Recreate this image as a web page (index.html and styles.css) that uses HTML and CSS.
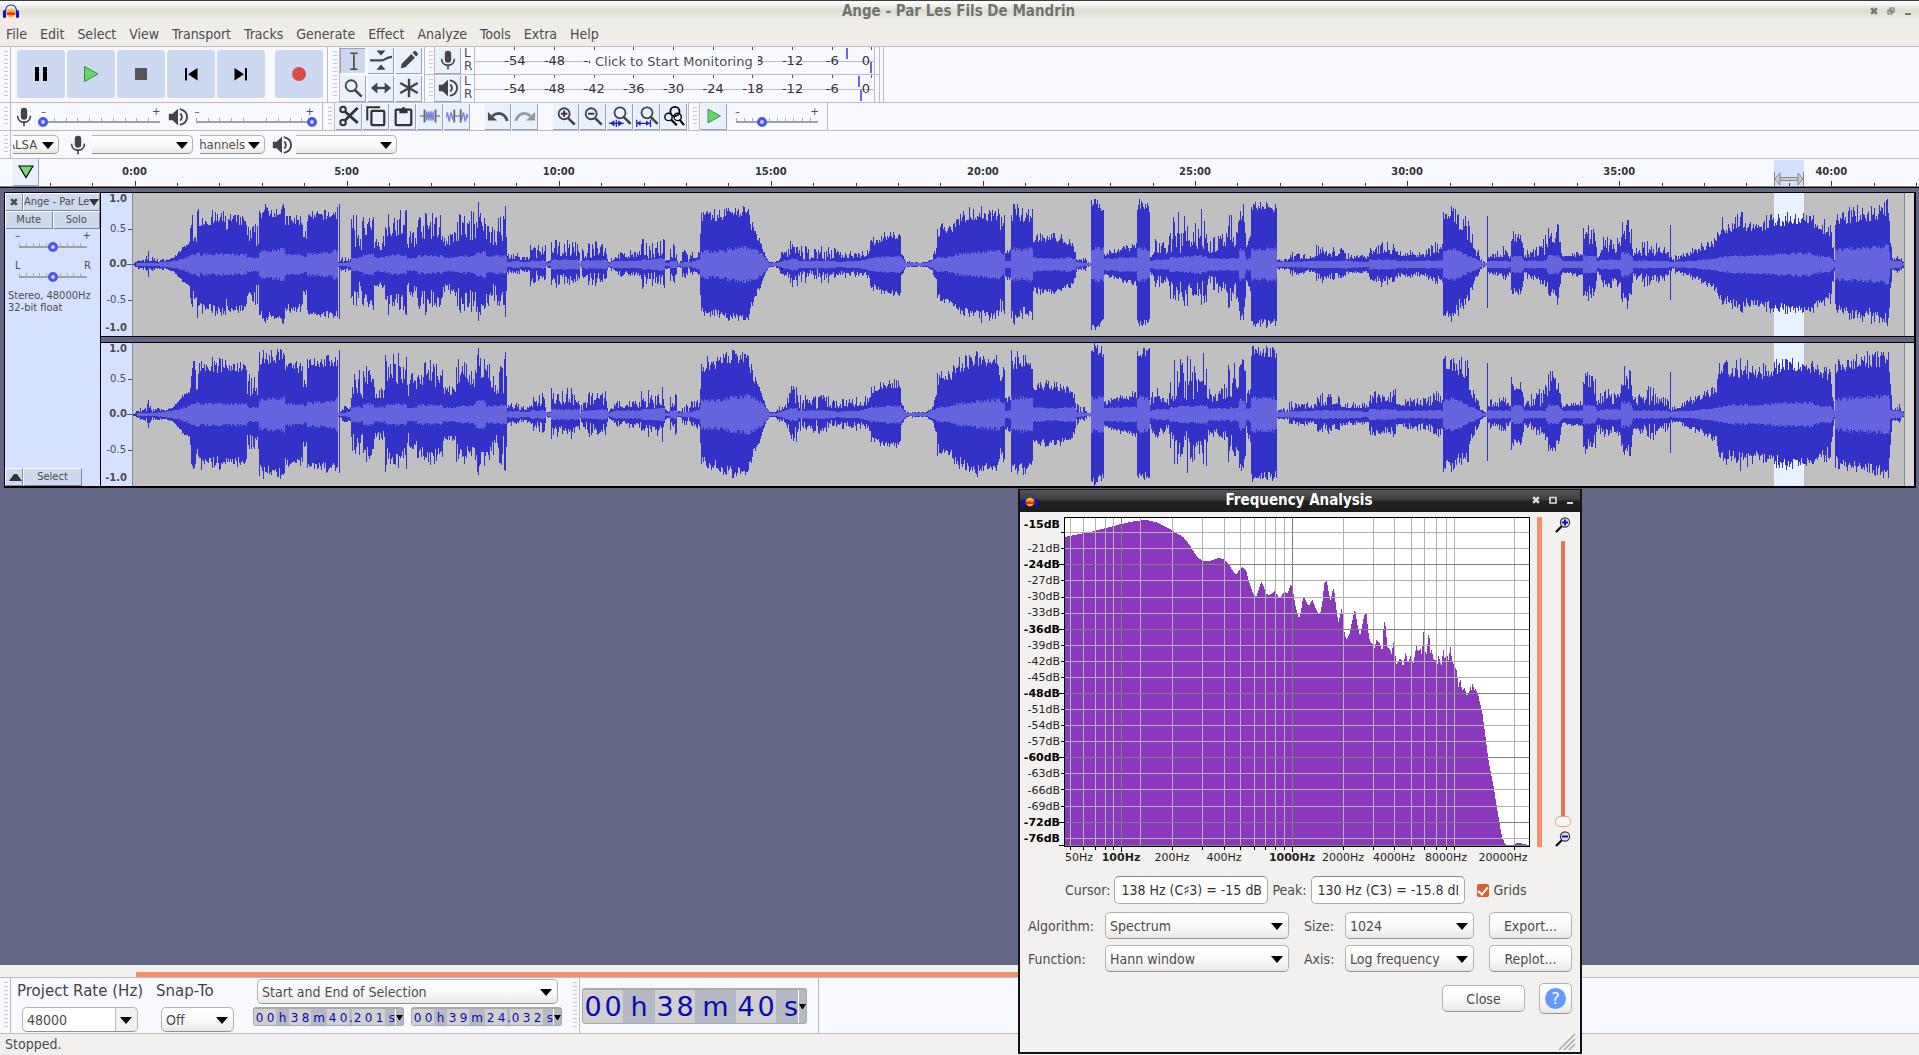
FILE: index.html
```html
<!DOCTYPE html>
<html lang="en">
<head>
<meta charset="utf-8">
<title>Ange - Par Les Fils De Mandrin</title>
<link rel="stylesheet" href="styles.css">
</head>
<body>
<svg class="defs" aria-hidden="true">
  <defs>
    <symbol id="i-logo" viewBox="0 0 16 15"><path d="M2.500 9C2 3 4.500 1 8 1s6 2 5.500 8" fill="none" stroke="#2a3ea8" stroke-width="1.200"/><circle cx="8" cy="9" r="4.200" fill="#f5b71c"/><path d="M4 9.500l1-1 1 1.500 1-2 1 1.500 1-1 1 1 1-1 1 1v1H4z" fill="#f22" stroke="#f22"/><rect x="0" y="6" width="3" height="8" rx="1.500" fill="#0a12d0"/><rect x="13" y="6" width="3" height="8" rx="1.500" fill="#0a12d0"/></symbol>
    <symbol id="i-pause" viewBox="0 0 24 24"><path d="M6 5h4v14H6zM14 5h4v14h-4z" fill="#000"/></symbol>
    <symbol id="i-play" viewBox="0 0 24 24"><path d="M5.500 4.500L19 12 5.500 19.500z" fill="#6ad567" stroke="#3c8a3a"/></symbol>
    <symbol id="i-stop" viewBox="0 0 24 24"><path d="M6 6h12v12H6z" fill="#555"/></symbol>
    <symbol id="i-start" viewBox="0 0 24 24"><path d="M6 6h2v12.500H6zM18.500 6v12.500L9 12.250z" fill="#000"/></symbol>
    <symbol id="i-end" viewBox="0 0 24 24"><path d="M16 6h2v12.500h-2zM5.500 6v12.500L15 12.250z" fill="#000"/></symbol>
    <symbol id="i-record" viewBox="0 0 24 24"><circle cx="12" cy="12" r="7" fill="#e04a4a"/></symbol>
    <symbol id="i-beam" viewBox="0 0 24 24"><path d="M9 3.500h3l1 .8 1-.8h3M9 21h3l1-.8 1 .8h3M13 4v16.500" fill="none" stroke="#444" stroke-width="1.800"/></symbol>
    <symbol id="i-env" viewBox="0 0 24 24"><path d="M7 1.500h10L12 7zM7 22.500h10L12 17z" fill="#444"/><path d="M0 12.500h12c5 0 4-3.500 12-4" fill="none" stroke="#444" stroke-width="2.400"/></symbol>
    <symbol id="i-pen" viewBox="0 0 24 24"><path d="M3 21l1-5L14.500 5.500l4 4L8 20zM15.800 4.200l1.700-1.700q1-1 2 0l2 2q1 1 0 2l-1.700 1.700z" fill="#444"/></symbol>
    <symbol id="i-lens" viewBox="0 0 24 24"><circle cx="10" cy="9.500" r="6" fill="none" stroke="#444" stroke-width="2"/><path d="M14 14l7.500 7.500" stroke="#444" stroke-width="2.800"/></symbol>
    <symbol id="i-shift" viewBox="0 0 24 24"><path d="M5 12h14" stroke="#444" stroke-width="2.600"/><path d="M8 6v12l-7-6zM16 6v12l7-6z" fill="#444"/></symbol>
    <symbol id="i-multi" viewBox="0 0 24 24"><path d="M12 2v20M2.500 6.500l19 11M2.500 17.500l19-11" stroke="#444" stroke-width="2.600"/></symbol>
    <symbol id="i-mic" viewBox="0 0 24 24"><rect x="8.500" y="2" width="7" height="13" rx="3.500" fill="#444"/><path d="M5 10.500c0 9.500 14 9.500 14 0M12 17v5" fill="none" stroke="#444" stroke-width="1.800"/></symbol>
    <symbol id="i-speaker" viewBox="0 0 24 24"><path d="M2 8.500h4l6-5.500v18l-6-5.500H2z" fill="#444"/><path d="M14.500 8q3.500 4 0 8M14 3.500c10.500 2.500 10.500 14.500 0 17" fill="none" stroke="#444" stroke-width="2"/></symbol>
    <symbol id="i-cut" viewBox="0 0 24 24"><circle cx="5.500" cy="5" r="3" fill="none" stroke="#333" stroke-width="2.200"/><circle cx="5.500" cy="19" r="3" fill="none" stroke="#333" stroke-width="2.200"/><path d="M7.500 7l14 12.500M7.500 17l14-14" stroke="#333" stroke-width="3"/></symbol>
    <symbol id="i-copy" viewBox="0 0 24 24"><path d="M2.500 17V2.500h14" fill="none" stroke="#333" stroke-width="2.200"/><rect x="7" y="6.500" width="14" height="15.500" rx="1" fill="none" stroke="#333" stroke-width="2.400"/></symbol>
    <symbol id="i-paste" viewBox="0 0 24 24"><rect x="4" y="5" width="17" height="17" rx="1" fill="none" stroke="#333" stroke-width="2.400"/><path d="M8 4h2.500q2-4 4 0H17v5H8z" fill="#333"/></symbol>
    <symbol id="i-trim" viewBox="0 0 24 24"><path d="M1 12h5M18 12h5" stroke="#7784e0" stroke-width="1.500"/><path d="M8 17V7l2.500 10V7l2.500 10V7l2.500 10V7" fill="none" stroke="#7784e0" stroke-width="1.500"/><path d="M6 5v14M18 5v14" stroke="#666" stroke-width="2"/></symbol>
    <symbol id="i-silence" viewBox="0 0 24 24"><path d="M0 14l1.500-6 2 10 2-10 2 8M10 12h5M17 16l2-8 2 10 2-8 1 4" fill="none" stroke="#7784e0" stroke-width="1.500"/><path d="M9 5v14M16 5v14" stroke="#666" stroke-width="2"/></symbol>
    <symbol id="i-undo" viewBox="0 0 24 24"><path d="M22 17.500C20 9 12 7 6 12" fill="none" stroke="currentColor" stroke-width="3"/><path d="M1 7.500v9.500h10z" fill="currentColor"/></symbol>
    <symbol id="i-zin" viewBox="0 0 24 24"><use href="#i-lens"/><path d="M6.500 9.500h7M10 6v7" stroke="#333" stroke-width="2"/></symbol>
    <symbol id="i-zout" viewBox="0 0 24 24"><use href="#i-lens"/><path d="M6.500 9.500h7" stroke="#333" stroke-width="2"/></symbol>
    <symbol id="i-zsel" viewBox="0 0 24 24"><g transform="translate(2 -1)"><use href="#i-lens" width="24" height="24"/></g><path d="M0 20h16M8 16v8" stroke="#22b" stroke-width="1.300"/><path d="M1 20l5-3.500v7zM15 20l-5-3.500v7z" fill="#22b"/></symbol>
    <symbol id="i-zfit" viewBox="0 0 24 24"><g transform="translate(2 -1)"><use href="#i-lens" width="24" height="24"/></g><path d="M0 20h16M.8 16v8M15.800 16v8" stroke="#22b" stroke-width="1.400"/><path d="M1 20l4-3v6zM15 20l-4-3v6z" fill="#22b"/></symbol>
    <symbol id="i-ztog" viewBox="0 0 24 24"><circle cx="13" cy="7" r="5" fill="none" stroke="#000" stroke-width="2"/><circle cx="6" cy="13" r="4" fill="none" stroke="#000" stroke-width="1.500"/><circle cx="16" cy="13" r="4" fill="none" stroke="#000" stroke-width="1.500"/><path d="M9 16l6 6M18 16l5 6" stroke="#000" stroke-width="2.400"/></symbol>
    <symbol id="i-pin" viewBox="0 0 16 14"><path d="M1 1h14L8 12.500z" fill="#77d874" stroke="#000" stroke-width="1.200"/></symbol>
    <symbol id="i-dzoom" viewBox="0 0 16 16"><path d="M1 15l6-6" stroke="#111" stroke-width="2.400"/><circle cx="10" cy="5.500" r="4.600" fill="#dde3f4" stroke="#333" stroke-width="1.200"/></symbol>
    <symbol id="i-wx" viewBox="0 0 8 8"><path d="M1.200 1.200l5.600 5.600M6.800 1.200L1.200 6.800" stroke="currentColor" stroke-width="2.600"/></symbol>
    <symbol id="i-wr" viewBox="0 0 8 8"><path d="M3 1h4v4H3zM1 3h4v4H1z" fill="none" stroke="currentColor" stroke-width="1.200"/></symbol>
    <symbol id="i-wm" viewBox="0 0 8 8"><path d="M1 1.500h6V7H1z" fill="none" stroke="currentColor" stroke-width="1.600"/></symbol>
    <symbol id="i-wn" viewBox="0 0 8 8"><path d="M1 6h6v2H1z" fill="currentColor"/></symbol>
  </defs>
</svg>

<header class="titlebar">
  <svg class="logo"><use href="#i-logo"/></svg>
  <h1>Ange - Par Les Fils De Mandrin</h1>
  <div class="wm"><button aria-label="Close"><svg><use href="#i-wx"/></svg></button><button aria-label="Restore"><svg><use href="#i-wr"/></svg></button><button aria-label="Minimise"><svg><use href="#i-wn"/></svg></button></div>
</header>
<nav class="menu">
  <a href="#">File</a><a href="#">Edit</a><a href="#">Select</a><a href="#">View</a><a href="#">Transport</a><a href="#">Tracks</a><a href="#">Generate</a><a href="#">Effect</a><a href="#">Analyze</a><a href="#">Tools</a><a href="#">Extra</a><a href="#">Help</a>
</nav>

<div class="dock dock-tall">
  <div class="bar transport"><i class="grip"></i>
    <button aria-label="Pause"><svg><use href="#i-pause"/></svg></button>
    <button aria-label="Play"><svg><use href="#i-play"/></svg></button>
    <button aria-label="Stop"><svg><use href="#i-stop"/></svg></button>
    <button aria-label="Skip to start"><svg><use href="#i-start"/></svg></button>
    <button aria-label="Skip to end"><svg><use href="#i-end"/></svg></button>
    <button class="rec" aria-label="Record"><svg><use href="#i-record"/></svg></button>
  </div>
  <div class="bar tools"><i class="grip"></i>
    <div class="toolgrid">
      <button class="tb on" aria-label="Selection tool"><svg><use href="#i-beam"/></svg></button>
      <button class="tb" aria-label="Envelope tool"><svg><use href="#i-env"/></svg></button>
      <button class="tb" aria-label="Draw tool"><svg><use href="#i-pen"/></svg></button>
      <button class="tb" aria-label="Zoom tool"><svg><use href="#i-lens"/></svg></button>
      <button class="tb" aria-label="Time shift tool"><svg><use href="#i-shift"/></svg></button>
      <button class="tb" aria-label="Multi tool"><svg><use href="#i-multi"/></svg></button>
    </div>
  </div>
  <div class="meters">
    <div class="meter-row"><i class="grip"></i>
      <button class="tb" aria-label="Recording level"><svg><use href="#i-mic"/></svg></button>
      <div class="lr"><span>L</span><span>R</span></div>
      <div class="meter">
        <ul><li>-54</li><li>-48</li><li>-42</li><li>-36</li><li>-30</li><li>-24</li><li>-18</li><li>-12</li><li>-6</li><li>0</li></ul>
        <i class="peak rec-l"></i><i class="peak rec-r"></i>
        <span class="hint">Click to Start Monitoring</span>
      </div>
    </div>
    <div class="meter-row"><i class="grip"></i>
      <button class="tb" aria-label="Playback level"><svg><use href="#i-speaker"/></svg></button>
      <div class="lr"><span>L</span><span>R</span></div>
      <div class="meter">
        <ul><li>-54</li><li>-48</li><li>-42</li><li>-36</li><li>-30</li><li>-24</li><li>-18</li><li>-12</li><li>-6</li><li>0</li></ul>
        <i class="peak play-l"></i><i class="peak play-r"></i>
      </div>
    </div>
  </div>
</div>

<div class="dock">
  <div class="bar mixer"><i class="grip"></i>
    <svg class="ic"><use href="#i-mic"/></svg>
    <div class="vol"><span>–</span><span>+</span><input type="range" aria-label="Recording volume" value="0"></div>
    <svg class="ic"><use href="#i-speaker"/></svg>
    <div class="vol"><span>–</span><span>+</span><input type="range" aria-label="Playback volume" value="100"></div>
  </div>
  <div class="bar edit"><i class="grip"></i>
    <div class="group">
      <button class="tb" aria-label="Cut"><svg><use href="#i-cut"/></svg></button><button class="tb" aria-label="Copy"><svg><use href="#i-copy"/></svg></button><button class="tb" aria-label="Paste"><svg><use href="#i-paste"/></svg></button><button class="tb" aria-label="Trim"><svg><use href="#i-trim"/></svg></button><button class="tb" aria-label="Silence"><svg><use href="#i-silence"/></svg></button>
    </div>
    <div class="group">
      <button class="tb" aria-label="Undo"><svg><use href="#i-undo"/></svg></button><button class="tb redo" aria-label="Redo"><svg><use href="#i-undo"/></svg></button>
    </div>
    <div class="group">
      <button class="tb" aria-label="Zoom in"><svg><use href="#i-zin"/></svg></button><button class="tb" aria-label="Zoom out"><svg><use href="#i-zout"/></svg></button><button class="tb" aria-label="Zoom to selection"><svg><use href="#i-zsel"/></svg></button><button class="tb" aria-label="Fit to width"><svg><use href="#i-zfit"/></svg></button><button class="tb" aria-label="Zoom toggle"><svg><use href="#i-ztog"/></svg></button>
    </div>
  </div>
  <div class="bar speed"><i class="grip"></i>
    <button class="tb" aria-label="Play at speed"><svg><use href="#i-play"/></svg></button>
    <div class="vol"><span>–</span><span>+</span><input type="range" aria-label="Speed" value="31"></div>
  </div>
</div>

<div class="dock">
  <div class="bar device"><i class="grip"></i>
    <div class="combo clip host"><select aria-label="Audio host"><option>ALSA</option></select></div>
    <svg class="ic"><use href="#i-mic"/></svg>
    <div class="combo clip dev"><select aria-label="Recording device"><option></option></select></div>
    <div class="combo clip chan"><select aria-label="Recording channels"><option>Channels</option></select></div>
    <svg class="ic"><use href="#i-speaker"/></svg>
    <div class="combo clip dev"><select aria-label="Playback device"><option></option></select></div>
  </div>
</div>

<div class="timeline">
  <button class="tb" aria-label="Pinned play head"><svg><use href="#i-pin"/></svg></button>
  <div class="ruler" id="ruler">
    <div class="ruler-sel"><svg viewBox="0 0 30 14"><path d="M0.500 0v14M29.500 0v14" stroke="#888"/><path d="M6 5.500h18v3H6z" fill="#ccc" stroke="#888"/><path d="M6 1v12L1 7zM24 1v12l5-6z" fill="#ccc" stroke="#888"/></svg></div>
  </div>
</div>

<main class="workspace">
  <section class="track">
    <div class="panel">
      <div class="p-row"><button class="p-x" aria-label="Delete track"><svg><use href="#i-wx"/></svg></button><button class="p-name"><span>Ange - Par Le</span><i></i></button></div>
      <div class="p-row p-ms"><button>Mute</button><button>Solo</button></div>
      <div class="vol"><span>–</span><span>+</span><input type="range" aria-label="Gain"></div>
      <div class="vol"><span>L</span><span>R</span><input type="range" aria-label="Pan"></div>
      <p>Stereo, 48000Hz<br>32-bit float</p>
      <div class="p-row p-foot"><button class="p-up" aria-label="Collapse"><i></i></button><button class="p-sel">Select</button></div>
    </div>
    <div class="channels">
      <div class="channel"><ol><li>1.0</li><li>0.5</li><li>0.0</li><li>-0.5</li><li>-1.0</li></ol><svg class="wave" data-seed="7" data-gain="100" viewBox="0 0 1781 143" preserveAspectRatio="none"></svg></div>
      <div class="channel"><ol><li>1.0</li><li>0.5</li><li>0.0</li><li>-0.5</li><li>-1.0</li></ol><svg class="wave" data-seed="23" data-gain="107" viewBox="0 0 1781 143" preserveAspectRatio="none"></svg></div>
    </div>
  </section>
</main>

<div class="hscroll"><i></i></div>
<footer class="selbar">
  <i class="grip"></i>
  <div class="col rate"><label for="rate">Project Rate (Hz)</label><div class="combo split"><input id="rate" type="text" value="48000"></div></div>
  <div class="col snap"><label for="snap">Snap-To</label><div class="combo"><select id="snap"><option>Off</option></select></div></div>
  <div class="col range">
    <div class="combo"><select aria-label="Selection mode"><option>Start and End of Selection</option></select></div>
    <div class="times">
      <div class="time" data-time="00 h 38 m 40.201 s"></div>
      <div class="time" data-time="00 h 39 m 24.032 s"></div>
    </div>
  </div>
  <i class="grip"></i>
  <div class="pos"><div class="time big" data-time="00 h 38 m 40 s"></div></div>
</footer>
<div class="status">Stopped.</div>

<section class="dialog" role="dialog" aria-label="Frequency Analysis">
  <header><svg class="logo"><use href="#i-logo"/></svg><h2>Frequency Analysis</h2>
    <div class="wm"><button aria-label="Close"><svg><use href="#i-wx"/></svg></button><button aria-label="Maximise"><svg><use href="#i-wm"/></svg></button><button aria-label="Minimise"><svg><use href="#i-wn"/></svg></button></div></header>
  <div class="graph">
    <ul class="db"><li class="m">-15dB</li><li>-21dB</li><li class="m">-24dB</li><li>-27dB</li><li>-30dB</li><li>-33dB</li><li class="m">-36dB</li><li>-39dB</li><li>-42dB</li><li>-45dB</li><li class="m">-48dB</li><li>-51dB</li><li>-54dB</li><li>-57dB</li><li class="m">-60dB</li><li>-63dB</li><li>-66dB</li><li>-69dB</li><li class="m">-72dB</li><li class="m">-76dB</li></ul>
    <div class="plot">
      <svg viewBox="165 114 1392 984" shape-rendering="crispEdges">
        <path fill="#8a39bd" d="M165 1098V171L190 166 220 160 247 154 280 146 334 132 370 124 395 121 415 121 440 127 460 137 490 153 520 171 540 197 560 228 577 243 600 243 625 234 640 237 655 250 668 272 677 284 697 261 708 272 720 315 733 350 740 348 754 306 762 322 768 340 778 346 795 333 808 356 822 337 834 338 843 312 850 340 858 385 865 411 870 411V1098z"/>
        <path fill="#8a39bd" d="M870 1098V408L877 375 882 348 888 365 895 376 901 376V1098z"/>
        <path fill="#8a39bd" transform="translate(870 0)" d="M30 1098V376L0 408 3 393 9 355 12 348 20 370 28 376 37 360 45 380 55 400 62 397 68 360 73 308 80 303 86 335 92 362 98 330 102 323 108 380 115 428 120 410 126 380 131 440 138 480 148 465 155 430 165 387 172 433 180 470 186 440 192 408 199 393 204 450 210 485 218 492 222 510 229 480 240 490 247 516 252 422 256 430 262 500 270 508 275 522 280 487 285 518 290 556 299 535 305 540 309 564 317 516 324 552 331 528 340 552 349 497 354 515 361 506 366 528 370 449 374 512 380 522 385 462 389 475 392 528 395 507 400 538 408 540 412 556 416 525 424 561 430 507 434 536 442 525 446 542 451 496 456 542 465 560 472 576 474 628 481 595 486 632 494 622 500 648 508 634 512 618 515 632 517 612 524 630 527 626 535 645 540 670 547 696 550 722 556 765 561 808 567 850 574 885 581 920 587 960 594 1000 600 1040 607 1072 615 1092 620 1097 643 1095 645 1091 660 1089 678 1093 686 1097V1098z"/>
        <g fill="none" stroke-width="3">
          <path stroke="#b2b2b2" d="M165 157.500h1392M165 205.500h1392M165 301.500h1392M165 352.500h1392M165 400.500h1392M165 496.500h1392M165 544.500h1392M165 592.500h1392M165 688.500h1392M165 736.500h1392M165 784.500h1392M165 880.500h1392M165 928.500h1392M165 979.500h1392M165 1075.500h1392M181.500 114v984M220.500 114v984M256.500 114v984M286.500 114v984M310.500 114v984M391.500 114v984M487.500 114v984M577.500 114v984M643.500 114v984M691.500 114v984M733.500 114v984M766.500 114v984M796.500 114v984M823.500 114v984M1000.500 114v984M1090.500 114v984M1153.500 114v984M1204.500 114v984M1243.500 114v984M1279.500 114v984M1309.500 114v984M1333.500 114v984M1513.500 114v984"/>
          <path stroke="#7f7f7f" d="M165 253.500h1392M165 448.500h1392M165 640.500h1392M165 832.500h1392M165 1027.500h1392M165 1096.500h1392M334.500 114v984M847.500 114v984"/>
          <path stroke="#000" d="M153 157.500h9M153 205.500h9M147 253.500h15M153 301.500h9M153 352.500h9M153 400.500h9M147 448.500h15M153 496.500h9M153 544.500h9M153 592.500h9M147 640.500h15M153 688.500h9M153 736.500h9M153 784.500h9M147 832.500h15M153 880.500h9M153 928.500h9M153 979.500h9M147 1027.500h15M147 1096.500h15M181.500 1101v9M220.500 1101v9M256.500 1101v9M286.500 1101v9M310.500 1101v9M334.500 1101v15M487.500 1101v9M577.500 1101v9M643.500 1101v9M691.500 1101v9M733.500 1101v9M766.500 1101v9M796.500 1101v9M823.500 1101v9M847.500 1101v15M1000.500 1101v9M1090.500 1101v9M1153.500 1101v9M1204.500 1101v9M1243.500 1101v9M1279.500 1101v9M1309.500 1101v9M1333.500 1101v9M1513.500 1101v9"/>
        </g>
      </svg>
      <div class="hz" id="hz"></div>
    </div>
    <i class="vbar"></i>
    <div class="zoomcol">
      <svg><use href="#i-dzoom"/><path d="M7 5.500h6M10 2.500v6" stroke="#11a" stroke-width="2"/></svg>
      <input type="range" aria-label="Vertical zoom" value="0">
      <svg><use href="#i-dzoom"/><path d="M7 5.500h6" stroke="#11a" stroke-width="2"/></svg>
    </div>
  </div>
  <div class="readout">
    <label for="cur">Cursor:</label><input id="cur" type="text" value="138 Hz (C♯3) = -15 dB">
    <label for="peak">Peak:</label><input id="peak" type="text" value="130 Hz (C3) = -15.8 dB">
    <label class="grids"><input type="checkbox" checked> Grids</label>
  </div>
  <div class="form">
    <label for="alg">Algorithm:</label><div class="combo"><select id="alg"><option>Spectrum</option></select></div>
    <label for="size">Size:</label><div class="combo"><select id="size"><option>1024</option></select></div><button class="btn">Export...</button>
    <label for="fn">Function:</label><div class="combo"><select id="fn"><option>Hann window</option></select></div>
    <label for="axis">Axis:</label><div class="combo"><select id="axis"><option>Log frequency</option></select></div><button class="btn">Replot...</button>
  </div>
  <div class="actions"><button class="btn">Close</button><button class="btn help" aria-label="Help"><span>?</span></button></div>
  <svg class="resize" viewBox="0 0 18 18"><path d="M1 17L17 1M6 17L17 6M11 17l6-6" stroke="#aaa" stroke-width="1.500"/></svg>
</section>
<script src="app.js"></script>
</body>
</html>
```
FILE: styles.css
```css
* { box-sizing: border-box; }
:root { --cond: "DejaVu Sans Condensed", "DejaVu Sans", sans-serif; --wide: "DejaVu Sans", sans-serif; --line: #bdbdbd; }
body { margin: 0; min-height: 100vh; display: flex; flex-direction: column; position: relative; overflow: hidden; background: #f2f0ee; color: #4c4c4c; font: 14px/18px var(--cond); }
button, input, select { font: inherit; color: inherit; margin: 0; padding: 0; border: 0; background: none; }
ul, ol, p, h1, h2 { margin: 0; padding: 0; list-style: none; }
svg { display: block; flex: none; }
.defs { position: absolute; width: 0; height: 0; }

.titlebar { height: 21px; display: flex; align-items: center; border-top: 1px solid #3c3a38; padding: 0 5px 0 3px; background: linear-gradient(#fff, #dddfd4 50%, #efeee8); }
.logo { width: 16px; height: 15px; }
h1, h2 { flex: 1; padding-left: 30px; text-align: center; font-size: 15px; line-height: 18px; font-weight: bold; color: #73736f; }
.wm { display: flex; gap: 5px; }
.wm button { width: 12px; height: 12px; display: grid; place-items: center; color: #777; }
.wm svg { width: 8px; height: 8px; }
.menu { height: 25px; display: flex; align-items: center; gap: 1px; background: #f0ede8; }
.menu a { color: inherit; text-decoration: none; padding: 0 6px; }

.dock { display: flex; height: 28px; border-top: 1px solid var(--line); background: #f8f9ff; }
.dock-tall { height: 56px; }
.bar { display: flex; align-items: center; border-right: 1px solid var(--line); }
.grip { align-self: stretch; flex: none; width: 11px; border-right: 1px solid var(--line); background: repeating-linear-gradient(#c8c8cc 0 1px, transparent 1px 4px) 4px 4px / 4px calc(100% - 8px) no-repeat; }
.transport { width: 328px; gap: 2px; align-items: flex-start; }
.transport .grip { margin-right: 4px; }
.transport button { width: 48px; height: 48px; margin-top: 3px; border-radius: 3px; background: #cdd9f0; display: grid; place-items: center; }
.transport svg { width: 24px; height: 24px; }
.transport .rec { margin-left: 8px; }
.tb { width: 26px; height: 26px; display: grid; place-items: center; background: #e9f1ff; border-right: 1px solid #9aa3b5; border-bottom: 1px solid #9aa3b5; }
.tb svg { width: 22px; height: 22px; }
.tb.on { background: #ccd8ef; border: 1px solid #99a3b8; border-right-color: #fff; border-bottom-color: #fff; }
.toolgrid { display: grid; grid-template-columns: repeat(3, 28px); row-gap: 2px; }
.tools { padding-left: 1px; }
.meters { border-right: 1px solid var(--line); padding-right: 3px; }
.meter-row { height: 28px; display: flex; align-items: center; border-bottom: 1px solid var(--line); border-right: 1px solid var(--line); padding-right: 4px; }
.meter-row .grip { width: 10px; }
.lr { width: 13px; height: 28px; padding-left: 3px; display: flex; flex-direction: column; font: 12px/13px var(--wide); }
.meter { position: relative; width: 401px; height: 27px; border: solid var(--line); border-width: 0 1px; background: linear-gradient(var(--line), var(--line)) 0 14px / 100% 1px no-repeat; }
.meter ul { display: flex; padding-left: 20px; font: 13px/28px var(--wide); }
.meter li { flex: 1; text-align: center; color: #333; background: linear-gradient(#555, #555) 50% 0 / 1px 3px no-repeat; }
.meter li:last-child { flex: none; width: 22px; text-align: right; padding-right: 4px; background-position: 19px 0; }
.peak { position: absolute; width: 2px; height: 11px; background: #6464ff; }
.rec-l { left: 371px; top: 1px; }
.rec-r { left: 395px; top: 15px; }
.play-l { left: 383px; top: 1px; }
.play-r { left: 385px; top: 15px; }
.hint { position: absolute; left: 115px; top: 6px; padding: 0 5px; background: #fbfbff; font: 13px/18px var(--wide); }

.ic { width: 22px; height: 22px; }
.vol { display: grid; grid-template-columns: 1fr 1fr; font: 10px/11px var(--wide); }
.vol span { padding: 0 3px; }
.vol span:nth-child(2) { text-align: right; }
.vol input { grid-column: 1 / -1; width: 100%; }
input[type=range] { appearance: none; height: 10px; background: linear-gradient(#a0a0a0, #a0a0a0) 4px 4px / calc(100% - 8px) 2px no-repeat, repeating-linear-gradient(90deg, #aaa 0 1px, transparent 1px 10%) 4px 1px / calc(100% - 8px) 4px no-repeat; }
input[type=range]::-webkit-slider-thumb { appearance: none; width: 10px; height: 10px; border-radius: 50%; border: 3px solid #4b55ee; background: #cdd0e0; }
.mixer { width: 323px; gap: 3px; padding-right: 5px; }
.mixer .grip { margin-right: -1px; }
.mixer .vol { flex: 1; }
.edit { padding-left: 1px; }
.group { display: flex; gap: 1px; padding-left: 1px; margin-right: 14px; }
.group:last-child { margin-right: 1px; }
.redo { color: #999; }
.redo svg { transform: scaleX(-1); }
.speed { width: 139px; }
.speed .tb { margin: 0 5px 0 1px; }
.speed .vol { width: 90px; }

.combo { position: relative; display: flex; }
.combo::after { content: ""; position: absolute; right: 6px; top: calc(50% - 3px); border: solid transparent; border-width: 7px 6px 0; border-top-color: #000; pointer-events: none; }
.combo select, .combo input { appearance: none; width: 100%; height: 27px; padding: 0 4px; border: 1px solid #b5b3b0; border-bottom-color: #949290; border-radius: 5px; background: linear-gradient(#fff, #f9f9f8 55%, #e9e8e6); }
.clip { overflow: hidden; justify-content: flex-end; }
.clip::after { right: 5px; }
.clip select { height: 19px; width: 120px; flex: none; padding: 0; }
.device { width: 405px; border-right: 0; }
.device .grip { margin-right: 2px; }
.device .ic { margin: 0 3px 0 8px; }
.device .chan + .ic { margin-left: 6px; }
.host { width: 46px; }
.chan { width: 65px; margin-left: 7px; }
.dev { width: 101px; }
.device .host select { width: 53px; font-size: 13px; }
.device .chan select { width: 75px; font-size: 13px; }

.timeline { display: flex; height: 29px; border-top: 1px solid var(--line); border-bottom: 1px solid #888; background: #f8f9ff; padding-left: 13px; }
.timeline .tb svg { width: 16px; height: 14px; }
.timeline .tb { height: 27px; }
.ruler { position: relative; flex: 1; overflow: hidden; }
.tick { position: absolute; bottom: 0; width: 1px; height: 3px; background: #333; }
.tick.major { height: 5px; }
.tick span { position: absolute; bottom: 7px; left: 0; transform: translateX(-50%); color: #333; font: bold 10px/14px var(--wide); }
.ruler-sel { position: absolute; right: 115px; top: 1px; bottom: 0; width: 30px; background: #d3e1ff; display: flex; align-items: flex-end; }
.ruler-sel svg { width: 30px; height: 14px; }

.workspace { flex: 1; border-top: 1px solid #000; background: #636685; padding: 4px 3px 0 4px; }
.track { display: flex; border: 1px solid #000; border-right-width: 2px; border-bottom-width: 2px; }
.panel { width: 96px; display: flex; flex-direction: column; background: #d5e2ff; border-right: 1px solid #000; font: 10px/12px var(--wide); }
.p-row { display: flex; }
.p-row button { height: 18px; background: #cdd9f0; border: 1px solid #fff; border-right-color: #888; border-bottom-color: #888; font: 11px/14px var(--cond); }
.p-row .p-x { width: 18px; display: grid; place-items: center; }
.p-x svg { width: 8px; height: 8px; }
.p-name { flex: 1; min-width: 0; display: flex; align-items: center; white-space: nowrap; }
.p-name span { flex: 1; min-width: 0; overflow: hidden; text-align: left; }
.p-name i, .p-up i { border: solid transparent; border-width: 7px 5px 0; border-top-color: #333; }
.p-ms button { flex: 1; }
.panel .vol { width: 76px; margin: 1px 0 0 10px; line-height: 12px; }
.panel .vol + .vol { margin-top: 8px; }
.panel .vol span { padding: 0; }
.panel p { padding: 8px 3px; font: 11px/12px var(--cond); }
.p-foot { margin-top: auto; }
.p-row .p-up { width: 18px; }
.p-up i { display: block; border-width: 0 5px 7px; border-color: transparent transparent #333; margin-left: 3px; }
.p-row .p-sel { width: 59px; }
.channels { flex: 1; display: flex; flex-direction: column; gap: 7px; background: linear-gradient(#000, #000) 0 143px / 100% 1px no-repeat, linear-gradient(#000, #000) 0 149px / 100% 1px no-repeat, #636685; }
.channel { display: flex; height: 143px; }
.channel ol { width: 32px; background: #d5e2ff; border-right: 1px solid #888; font: 10px/12px var(--wide); text-align: right; }
.channel li { padding-right: 6px; background: linear-gradient(#555, #555) right 50% / 4px 1px no-repeat; }
.channel li:nth-child(odd) { font-weight: bold; background: none; padding-right: 5px; }
.channel li:nth-child(2) { margin-top: 18px; }
.channel li:nth-child(3) { margin: 23px 0 24px; background: linear-gradient(#555, #555) right 50% / 5px 1px no-repeat; }
.channel li:nth-child(5) { margin-top: 16px; }
.wave { flex: 1; min-width: 0; height: 143px; background: #c0c0c0; }

.hscroll { height: 12px; padding: 7px 380px 0 136px; background: #f2f0ee; }
.hscroll i { display: block; height: 5px; background: #f48f69; }
.selbar { display: flex; height: 57px; border: solid var(--line); border-width: 1px 0; background: #f8f9ff; }
.selbar label { font: 15px/20px var(--wide); color: #444; }
.selbar .combo select, .selbar .combo input { height: 25px; }
.col { display: flex; flex-direction: column; padding-top: 3px; }
.rate { width: 139px; padding-left: 6px; }
.rate .combo { width: 116px; margin: 6px 0 0 5px; }
.rate input { background: linear-gradient(90deg, transparent 92px, #bbb 92px 93px, #f3f2f0 93px), #fff; }
.snap { width: 101px; padding-left: 6px; }
.snap .combo { width: 73px; margin: 6px 0 0 5px; }
.range { width: 318px; padding: 1px 0 0 6px; }
.range .combo { width: 301px; }
.range .combo select { height: 25px; }
.times { display: flex; gap: 7px; padding-top: 3px; margin-left: -4px; }
.time { display: flex; height: 19px; width: 151px; border: 1px solid #aaa; border-top-width: 2px; border-radius: 3px; background: #b4b9c4; color: #0a0aaf; font: 12px/18px var(--wide); white-space: nowrap; text-align: center; }
.time b { font-weight: normal; background: #d0d0d0; width: 11px; }
.time .dot { width: 3px; }
.time .unit-h { width: 13px; }
.time .unit-m { width: 16px; }
.time .unit-s { flex: 1; text-align: right; }
.time i { width: 8px; border-left: 1px solid #fff; }
.time i::after { content: ""; display: block; margin-top: 6px; border: solid transparent; border-width: 5px 3px 0; border-top-color: #000; }
.pos { padding: 10px 11px 0 2px; border-right: 1px solid var(--line); }
.big { width: 225px; height: 36px; font-size: 27px; line-height: 34px; }
.big b { width: 20px; }
.big .unit-h { width: 32px; }
.big .unit-m { width: 41px; }
.big i::after { margin-top: 14px; }
.status { height: 21px; padding-left: 5px; line-height: 21px; }

.dialog { position: absolute; left: 1018px; top: 489px; width: 564px; height: 565px; border: 2px solid #141416; border-top-width: 1px; background: #f2f1f0; display: flex; flex-direction: column; }
.dialog header { height: 22px; display: flex; align-items: center; padding: 0 4px 2px 2px; background: linear-gradient(#555, #3c3c3c 45%, #222 50%, #1c1c1c); }
.dialog h2 { color: #fff; }
.dialog .wm button { color: #ddd; }
.graph { display: flex; padding: 5px 0 0 1px; height: 335px; }
.db { width: 39px; margin-right: 4px; display: flex; flex-direction: column; justify-content: space-between; color: #222; font: 11px/16px var(--wide); }
.db li:first-child { margin-bottom: 8px; }
.m { font-weight: bold; color: #000; }
.db li { white-space: nowrap; display: flex; justify-content: flex-end; }
.plot { position: relative; width: 466px; height: 330px; border: 1px solid #000; background: #fff; }
.plot svg { width: 464px; height: 328px; overflow: visible; }
.hz span { position: absolute; top: 333px; transform: translateX(-50%); color: #222; font: 11px/14px var(--wide); }
.hz .m { font-weight: bold; }
.vbar { width: 5px; height: 330px; margin-left: 7px; background: #f48f69; }
.zoomcol { width: 17px; height: 330px; margin-left: 12px; display: flex; flex-direction: column; align-items: center; }
.zoomcol svg { width: 16px; height: 16px; }
.zoomcol input { writing-mode: vertical-lr; direction: rtl; width: 17px; flex: 1; margin: 8px 0 4px; background: linear-gradient(#e07850, #e07850) 7px 0 / 4px 100% no-repeat; }
.zoomcol input::-webkit-slider-thumb { width: 16px; height: 11px; border: 1px solid #e6a188; border-radius: 5px; background: #f7f5f3; }
.readout { display: flex; align-items: center; margin: 29px 0 0 45px; height: 28px; }
.readout input[type=text] { width: 154px; height: 28px; margin: 0 4px; padding: 0 6px; border: 1px solid #aaa; border-top-color: #888; border-radius: 5px; background: #fff; color: #333; }
.grids { display: flex; align-items: center; gap: 5px; margin-left: 8px; }
.grids input { appearance: none; width: 12px; height: 13px; border-radius: 2px; background: #d8602f; display: grid; place-items: center; }
.grids input::before { content: ""; width: 8px; height: 4px; border: solid #fff; border-width: 0 0 2px 2px; transform: rotate(-50deg); }
.form { display: grid; grid-template-columns: 77px 184px 15px 41px 129px 83px; align-items: center; row-gap: 6px; margin: 8px 0 0 8px; }
.form label:nth-of-type(even) { grid-column: 4; }
.form .btn { margin-left: 15px; width: 83px; }
.btn { height: 27px; border: 1px solid #b5b3b0; border-bottom-color: #949290; border-radius: 5px; background: linear-gradient(#fff, #f9f9f8 55%, #e9e8e6); }
.actions { display: flex; justify-content: flex-end; align-items: center; gap: 14px; margin: 11px 8px 0 0; }
.actions .btn { width: 83px; }
.actions .help { width: 33px; height: 31px; display: grid; place-items: center; }
.help span { width: 21px; height: 21px; border-radius: 50%; background: #6699ff; color: #fff; font: 16px/21px var(--wide); }
.resize { position: absolute; right: 4px; bottom: 1px; width: 18px; height: 18px; }
```
FILE: app.js
```js
// Peak envelope of the clip: [x, quiet peak, loud peak, rms], in pixels from the left of the window.
const ENV = [
[133,0,1,0],[140,2,6,1],[148,2,10,1],[155,2,6,1],[165,3,5,2],[172,5,7,3],[178,10,12,4],[182,14,18,5],[189,20,22,7],
[190,24,62,8],[199,20,56,10],[200,38,54,9],[225,38,54,9],[226,32,50,9],[229,40,52,9],[246,38,48,9],[247,16,40,6],[258,18,42,6],
[259,46,61,12],[284,48,61,14],[285,38,51,9],[302,38,50,9],[303,24,35,7],[306,24,35,7],[307,42,52,10],[332,45,56,11],[337,45,60,14],[338,1,3,1],
[344,2,10,1],[350,3,7,2],[351,14,50,6],[362,14,48,6],[363,28,52,9],[373,28,48,9],[374,14,26,6],[384,14,30,6],[385,28,58,8],[406,28,56,9],[407,14,36,5],
[416,18,40,6],[417,26,52,8],[442,24,52,8],[443,18,28,6],[455,18,34,6],[456,22,52,7],[475,24,54,8],[476,36,56,11],[485,32,52,11],[486,18,50,7],[506,18,56,8],
[507,5,12,2],[519,4,12,3],[520,3,7,2],[529,4,9,2],[530,6,24,3],[545,5,20,3],[546,1,3,1],[550,1,4,1],[551,8,25,4],[579,8,24,4],[580,1,3,1],[583,5,22,3],[606,8,24,4],[608,1,3,1],
[616,5,12,3],[640,6,15,3],[641,5,26,4],[664,6,26,5],[665,3,5,1],[669,2,5,1],[670,5,23,3],[676,5,20,3],[677,1,3,1],[681,1,4,1],[682,2,14,2],[687,2,14,2],[688,1,2,1],[690,5,12,2],[699,6,14,4],
[701,38,54,12],[722,44,56,12],[728,48,60,14],[748,46,60,16],[752,30,42,14],[760,20,25,11],[765,7,9,6],[769,2,2,1],[775,1,2,1],[780,2,12,2],[788,5,18,4],[790,10,30,5],[797,10,30,5],[798,4,18,3],
[830,4,22,3],[836,5,14,2],[860,6,16,3],[868,8,18,5],[871,18,26,6],[885,24,32,7],[900,24,34,7],[901,8,12,6],[906,1,3,1],[926,1,2,1],[932,4,7,3],[936,12,20,5],[937,26,40,6],[952,32,48,7],[956,38,54,9],[975,44,59,11],[998,42,60,13],[1000,30,48,10],[1004,35,56,10],
[1005,10,18,3],[1010,10,18,3],[1011,42,62,14],[1032,42,56,14],[1033,22,32,6],[1055,22,32,5],[1070,18,28,6],[1075,10,18,5],[1076,2,11,2],[1085,1,6,1],[1090,1,1,1],
[1091,58,69,15],[1103,52,64,14],[1104,8,12,5],[1120,12,18,6],[1136,14,26,6],[1137,54,66,15],[1149,52,62,14],[1150,6,16,3],[1155,12,28,4],[1168,8,20,4],[1169,10,52,6],[1206,14,60,8],[1208,10,28,5],[1227,14,32,5],[1228,14,50,5],[1238,18,48,6],
[1239,42,64,14],[1244,40,62,12],[1246,10,20,4],[1250,20,30,6],[1251,54,64,14],[1276,52,63,14],[1277,2,6,2],[1288,2,5,2],[1289,4,14,2],[1315,5,10,3],[1316,7,20,3],[1340,7,19,3],[1345,5,12,3],[1368,5,10,2],
[1369,10,23,4],[1395,10,24,4],[1396,7,14,3],[1420,7,16,3],[1434,8,20,3],[1435,12,23,3],[1442,10,22,3],[1443,44,57,12],[1455,38,58,14],[1463,28,54,10],[1469,22,50,7],[1473,12,26,6],[1478,5,14,3],[1482,1,4,1],[1486,1,1,1],
[1488,6,14,3],[1508,7,20,3],[1510,4,9,2],[1511,22,35,7],[1521,22,32,7],[1524,6,13,3],[1545,8,30,3],[1548,20,42,8],[1558,20,40,8],[1562,6,9,3],[1582,8,14,3],[1583,20,46,8],[1595,18,34,7],[1597,6,12,3],[1602,10,27,4],[1620,9,26,4],
[1621,26,48,11],[1631,20,42,9],[1633,8,15,3],[1650,8,28,3],[1667,7,15,3],[1670,2,8,2],[1690,8,16,3],[1716,18,28,5],[1718,26,48,6],[1735,34,54,8],[1760,32,48,8],[1790,40,54,10],[1810,38,52,10],[1820,32,44,7],[1830,25,46,7],[1834,3,10,2],
[1835,38,55,13],[1860,42,61,15],[1880,44,60,15],[1888,50,66,19],[1890,20,30,4],[1892,3,6,3],[1899,4,10,3],[1904,0,1,0]];
const SPIKES = { 148: 13, 339: 60, 478: 62, 505: 58, 1487: 48, 1670: 39 };

function drawWave(svg) {
  let s = +svg.dataset.seed;
  const gain = svg.dataset.gain / 100;
  const rnd = () => (s = (s * 16807) % 2147483647) / 2147483647;
  for (let n = 0; n < 9; n++) rnd();
  let peak = "", rms = "", k = 0;
  for (let x = 133; x < 1904; x++) {
    while (k < ENV.length - 2 && ENV[k + 1][0] <= x) k++;
    const a = ENV[k], b = ENV[k + 1];
    const t = Math.max(0, Math.min(1, (x - a[0]) / (b[0] - a[0] || 1)));
    const at = i => a[i] + (b[i] - a[i]) * t;
    const r = Math.pow(rnd(), 1.4);
    let up = (at(1) + (at(2) - at(1)) * r) * gain;
    let dn = (at(1) + (at(2) - at(1)) * (r * 0.6 + Math.pow(rnd(), 1.4) * 0.4)) * gain;
    if (SPIKES[x]) { up = SPIKES[x] * gain; dn = up * 0.9; }
    up = Math.min(71, Math.round(up)); dn = Math.min(71, Math.round(dn));
    const q = Math.min(up, dn, Math.round(at(3) * (0.9 + rnd() * 0.3) * gain));
    peak += `M${x - 133} ${71 - up}h1v${up + dn + 1}h-1z`;
    if (q > 0) rms += `M${x - 133} ${71 - q}h1v${2 * q + 1}h-1z`;
  }
  svg.innerHTML = `<g shape-rendering="crispEdges"><path fill="#e8f1ff" d="M1641 0h30v143h-30z"/><path fill="#d4d4d4" d="M1772 0h9v143h-9z"/><path fill="#888" d="M1771 0h1v143h-1z"/><path fill="#3232c8" d="${peak}"/><path fill="#6464dc" d="${rms}"/></g>`;
}
document.querySelectorAll(".wave").forEach(drawWave);

// One tick a minute, a label every five.
const ruler = document.getElementById("ruler");
for (let m = -2; m <= 42; m++) {
  const t = document.createElement("i");
  t.className = m % 5 ? "tick" : "tick major";
  t.style.left = ((95.5 + m * 42.42) / 18.8).toFixed(3) + "%";
  if (m % 5 === 0) t.innerHTML = `<span>${m}:00</span>`;
  ruler.append(t);
}

const hz = document.getElementById("hz");
[[50, 14], [100, 56], [200, 107], [400, 159], [1000, 227], [2000, 278], [4000, 329], [8000, 381], [20000, 438]].forEach(([f, x]) => {
  const e = document.createElement("span");
  e.textContent = f + "Hz";
  e.style.left = x + "px";
  if (f === 100 || f === 1000) e.className = "m";
  hz.append(e);
});

// Time fields: every digit sits in its own cell.
document.querySelectorAll(".time").forEach(el => {
  el.innerHTML = el.dataset.time.replace(/ /g, "").split("").map(c =>
    /\d/.test(c) ? `<b>${c}</b>` : c === "." ? `<span class="dot">.</span>` : `<span class="unit-${c}">${c}</span>`
  ).join("") + "<i></i>";
});
```
